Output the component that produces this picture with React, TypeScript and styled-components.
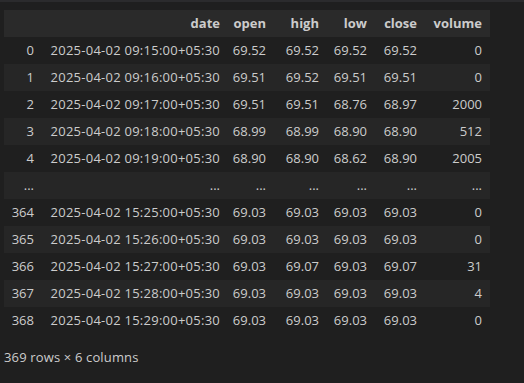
import React from "react";
import styled, { createGlobalStyle } from "styled-components";

const Global = createGlobalStyle`
  html, body { margin: 0; padding: 0; background: #1f1f1f; }
  body { font-family: "Open Sans", "Noto Sans", sans-serif; color: #cccccc; }
`;

const Page = styled.div`
  width: 524px;
  height: 383px;
  background: #1f1f1f;
  display: flex;
  flex-direction: column;
  overflow: hidden;
`;

const TopStrip = styled.div`
  height: 2px;
  background: #2b2b2d;
  flex: none;
`;

const Output = styled.div`
  padding: 8px 0 0 4px;
  display: flex;
  flex-direction: column;
`;

const Table = styled.table`
  border-collapse: collapse;
  border-spacing: 0;
  table-layout: fixed;
  width: 486px;
  font-size: 13px;
`;

const HeadRow = styled.tr`
  background: #2a2a2a;
`;

const Row = styled.tr<{ $odd: boolean }>`
  background: ${(p) => (p.$odd ? "#262626" : "transparent")};
`;

const Th = styled.th`
  height: 27px;
  padding: 0 8px 0 0;
  text-align: right;
  font-weight: 700;
  color: #cccccc;
  white-space: nowrap;
  line-height: 27px;
`;

const Td = styled.td`
  height: 27px;
  padding: 0 8px 0 0;
  text-align: right;
  color: #cccccc;
  white-space: nowrap;
  line-height: 27px;
`;

const DateCell = styled(Td)`
  letter-spacing: 0.25px;
`;

const Footer = styled.div`
  margin-top: 14px;
  font-size: 13px;
  color: #cccccc;
  line-height: 18px;
  letter-spacing: 0.15px;
`;

const widths = [38, 186, 46, 53, 48, 50, 65];
const headers = ["", "date", "open", "high", "low", "close", "volume"];

const rows: string[][] = [
  ["0", "2025-04-02 09:15:00+05:30", "69.52", "69.52", "69.52", "69.52", "0"],
  ["1", "2025-04-02 09:16:00+05:30", "69.51", "69.52", "69.51", "69.51", "0"],
  ["2", "2025-04-02 09:17:00+05:30", "69.51", "69.51", "68.76", "68.97", "2000"],
  ["3", "2025-04-02 09:18:00+05:30", "68.99", "68.99", "68.90", "68.90", "512"],
  ["4", "2025-04-02 09:19:00+05:30", "68.90", "68.90", "68.62", "68.90", "2005"],
  ["...", "...", "...", "...", "...", "...", "..."],
  ["364", "2025-04-02 15:25:00+05:30", "69.03", "69.03", "69.03", "69.03", "0"],
  ["365", "2025-04-02 15:26:00+05:30", "69.03", "69.03", "69.03", "69.03", "0"],
  ["366", "2025-04-02 15:27:00+05:30", "69.03", "69.07", "69.03", "69.07", "31"],
  ["367", "2025-04-02 15:28:00+05:30", "69.03", "69.03", "69.03", "69.03", "4"],
  ["368", "2025-04-02 15:29:00+05:30", "69.03", "69.03", "69.03", "69.03", "0"],
];

export default function App() {
  return (
    <Page>
      <Global />
      <TopStrip />
      <Output>
        <Table>
          <colgroup>
            {widths.map((w, i) => (
              <col key={i} style={{ width: w }} />
            ))}
          </colgroup>
          <thead>
            <HeadRow>
              {headers.map((h, i) => (
                <Th key={i}>{h}</Th>
              ))}
            </HeadRow>
          </thead>
          <tbody>
            {rows.map((r, ri) => (
              <Row key={ri} $odd={ri % 2 === 1}>
                {r.map((c, ci) =>
                  ci === 1 && c !== "..." ? <DateCell key={ci}>{c}</DateCell> : <Td key={ci}>{c}</Td>
                )}
              </Row>
            ))}
          </tbody>
        </Table>
        <Footer>369 rows × 6 columns</Footer>
      </Output>
    </Page>
  );
}
